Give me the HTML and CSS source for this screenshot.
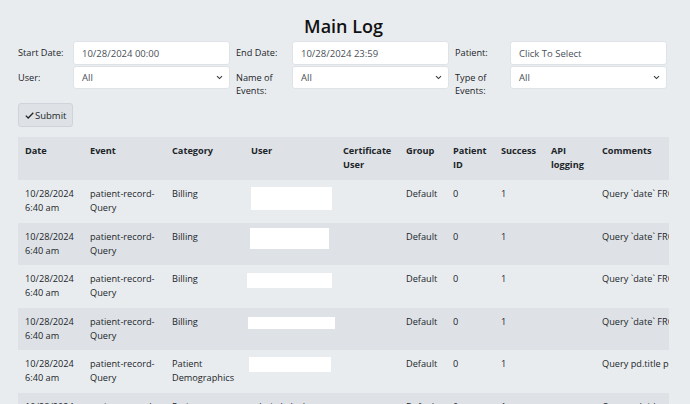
FILE: index.html
```html
<!DOCTYPE html>
<html>
<head>
<meta charset="utf-8">
<link rel="stylesheet" href="styles.css">
</head>
<body>
<div class="page">
  <h2 class="title">Main Log</h2>
  <div class="filters">
    <label class="lbl first">Start Date:</label>
    <div class="field">10/28/2024 00:00</div>
    <label class="lbl">End Date:</label>
    <div class="field">10/28/2024 23:59</div>
    <label class="lbl">Patient:</label>
    <div class="field">Click To Select</div>

    <label class="lbl first">User:</label>
    <div class="field select"><span>All</span><svg class="chev" width="7" height="5" viewBox="0 0 7 5"><path d="M1 1.2 L3.5 3.6 L6 1.2" fill="none" stroke="#343a40" stroke-width="1.1"/></svg></div>
    <label class="lbl">Name of Events:</label>
    <div class="field select"><span>All</span><svg class="chev" width="7" height="5" viewBox="0 0 7 5"><path d="M1 1.2 L3.5 3.6 L6 1.2" fill="none" stroke="#343a40" stroke-width="1.1"/></svg></div>
    <label class="lbl">Type of Events:</label>
    <div class="field select"><span>All</span><svg class="chev" width="7" height="5" viewBox="0 0 7 5"><path d="M1 1.2 L3.5 3.6 L6 1.2" fill="none" stroke="#343a40" stroke-width="1.1"/></svg></div>
  </div>
  <button class="submit"><svg width="9" height="7" viewBox="0 0 9 7"><path d="M0.8 3.6 L3.2 6 L8.3 0.8" fill="none" stroke="#212529" stroke-width="1.3"/></svg>Submit</button>

  <div class="table-wrap">
    <table class="log">
      <colgroup>
        <col class="c-date"><col class="c-event"><col class="c-cat"><col class="c-user"><col class="c-cert"><col class="c-group"><col class="c-pid"><col class="c-succ"><col class="c-api"><col class="c-comm">
      </colgroup>
      <thead>
        <tr><th>Date</th><th>Event</th><th>Category</th><th>User</th><th>Certificate User</th><th>Group</th><th>Patient ID</th><th>Success</th><th>API logging</th><th>Comments</th></tr>
      </thead>
      <tbody>
        <tr><td>10/28/2024 6:40 am</td><td>patient-record-Query</td><td>Billing</td><td><span class="redact r1"></span></td><td></td><td>Default</td><td>0</td><td>1</td><td></td><td class="nowrap">Query `date` FROM billing</td></tr>
        <tr><td>10/28/2024 6:40 am</td><td>patient-record-Query</td><td>Billing</td><td><span class="redact r2"></span></td><td></td><td>Default</td><td>0</td><td>1</td><td></td><td class="nowrap">Query `date` FROM billing</td></tr>
        <tr><td>10/28/2024 6:40 am</td><td>patient-record-Query</td><td>Billing</td><td><span class="redact r3"></span></td><td></td><td>Default</td><td>0</td><td>1</td><td></td><td class="nowrap">Query `date` FROM billing</td></tr>
        <tr><td>10/28/2024 6:40 am</td><td>patient-record-Query</td><td>Billing</td><td><span class="redact r4"></span></td><td></td><td>Default</td><td>0</td><td>1</td><td></td><td class="nowrap">Query `date` FROM billing</td></tr>
        <tr><td>10/28/2024 6:40 am</td><td>patient-record-Query</td><td>Patient Demographics</td><td><span class="redact r5"></span></td><td></td><td>Default</td><td>0</td><td>1</td><td></td><td class="nowrap">Query pd.title pd.fname</td></tr>
        <tr><td>10/28/2024 6:40 am</td><td>patient-record-Query</td><td>Patient Demographics</td><td>admin.kelsoh</td><td></td><td>Default</td><td>0</td><td>1</td><td></td><td class="nowrap">Query pd.title pd.fname</td></tr>
      </tbody>
    </table>
  </div>
</div>
</body>
</html>
```
FILE: styles.css
```css
html, body {
  margin: 0;
  padding: 0;
  background: #e9ecef;
}
body {
  font-family: "Open Sans", "Noto Sans", sans-serif;
  font-size: 9.2px;
  color: #212529;
}
.page {
  padding: 0 21px 0 18px;
}
.title {
  margin: 0;
  padding-top: 14px;
  height: 27px;
  text-align: center;
  font-size: 18px;
  font-weight: 600;
  line-height: 24px;
  color: #111;
}
.filters {
  display: grid;
  grid-template-columns: 55px 157px 62px 157px 61px 157px;
  row-gap: 1px;
}
.lbl {
  padding-top: 5px;
  line-height: 13px;
  font-size: 9.2px;
}
.lbl:not(.first) {
  padding-left: 6px;
}
.field {
  box-sizing: border-box;
  height: 24px;
  background: #fff;
  border: 1px solid #dfe3e7;
  border-radius: 3px;
  padding: 0 8px;
  display: flex;
  align-items: center;
  font-size: 9.5px;
  color: #495057;
}
.select {
  height: 23px;
  justify-content: space-between;
  padding-right: 6px;
}
.chev {
  display: block;
}
.submit {
  margin-top: 6px;
  box-sizing: border-box;
  width: 55px;
  height: 24px;
  display: flex;
  align-items: center;
  gap: 1px;
  padding: 0 0 0 6px;
  background: #dee2e6;
  border: 1px solid #ced4da;
  border-radius: 3px;
  font-family: inherit;
  font-size: 9.5px;
  color: #212529;
}
.table-wrap {
  margin-top: 10px;
  width: 651px;
  overflow: hidden;
}
.log {
  table-layout: fixed;
  border-collapse: collapse;
  width: 727px;
}
.c-date { width: 65px; }
.c-event { width: 82px; }
.c-cat { width: 79px; }
.c-user { width: 92px; }
.c-cert { width: 63px; }
.c-group { width: 47px; }
.c-pid { width: 48px; }
.c-succ { width: 50px; }
.c-api { width: 51px; }
.c-comm { width: 150px; }
.log th, .log td {
  padding: 7px 7px;
  line-height: 14px;
  vertical-align: top;
  text-align: left;
  font-size: 9.2px;
}
.log th {
  height: 29px;
  font-weight: 700;
  background: #dee2e6;
}
.log td {
  height: 28.5px;
}
.log tbody tr:nth-child(even) td {
  background: #dee2e6;
}
.nowrap {
  white-space: nowrap;
}
.redact {
  display: block;
  background: #fff;
}
.r1 { width: 81px; height: 23px; margin: 0 0 0 0; }
.r2 { width: 79px; height: 21px; margin: -2px 0 0 -1px; }
.r3 { width: 85px; height: 15px; margin: 1px 0 0 -4px; }
.r4 { width: 87px; height: 12px; margin: 2px 0 0 -3px; }
.r5 { width: 82px; height: 15px; margin: 0 0 0 -2px; }
```
